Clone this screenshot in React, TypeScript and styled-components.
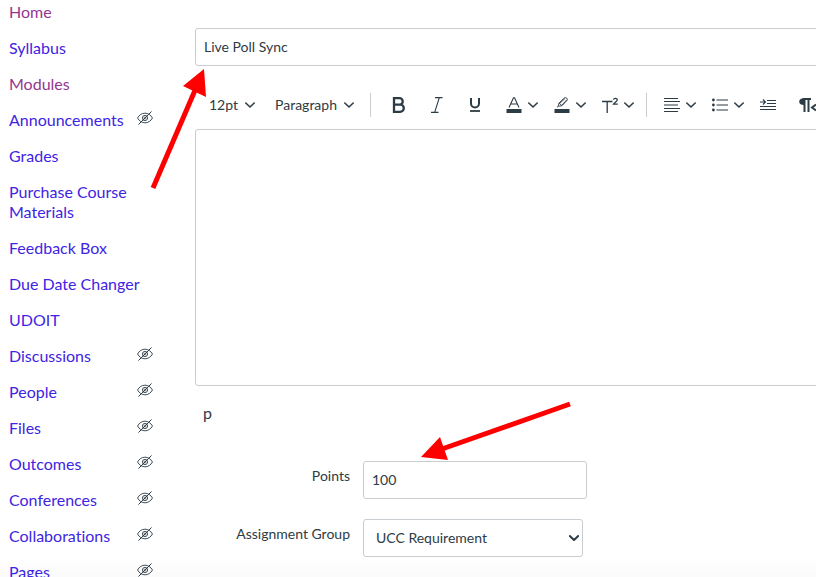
import React from "react";
import styled, { createGlobalStyle } from "styled-components";

const ink = "#2d3b45";
const line = "#c7cdd1";

const GlobalStyle = createGlobalStyle`
  * { box-sizing: border-box; }
  body { margin: 0; background: #fff; }
  body, button, input, select, textarea {
    font-family: Lato, "Liberation Sans", sans-serif;
    font-variant-ligatures: none;
    color: ${ink};
  }
`;

const Page = styled.div`
  display: flex;
  height: 100vh;
  overflow: hidden;
  background: linear-gradient(to top, #fafafa, #fff 20px);
`;

const CourseNav = styled.nav`
  flex: none;
  width: 195px;
  padding: 2px 42px 0 9px;
`;

const NavList = styled.ul`
  display: flex;
  flex-direction: column;
  gap: 16px;
  margin: 0;
  padding: 0;
  list-style: none;
`;

const NavItem = styled.li`
  display: flex;
  justify-content: space-between;
  font-size: 16px;
  line-height: 20px;
  svg { flex: none; }
`;

const NavLink = styled.a<{ $visited?: boolean }>`
  color: ${(p) => (p.$visited ? "#943690" : "#4024e2")};
  text-decoration: none;
`;

const Main = styled.main`
  flex: 1;
  min-width: 0;
  margin-right: -16px;
  padding-top: 28px;
`;

const Anchor = styled.div`
  position: relative;
`;

const Field = styled.input`
  display: block;
  width: 100%;
  height: 38px;
  padding: 0 8px 2px;
  border: 1px solid ${line};
  border-radius: 3px;
  background: #fff;
  font-size: 14px;
  line-height: 20px;
`;

const Toolbar = styled.div`
  display: flex;
  align-items: flex-start;
  height: 63px;
  padding: 15px 0 0 6px;
  overflow: hidden;
`;

const Group = styled.div`
  display: flex;
  flex: none;
  margin-right: 4px;
`;

const Tool = styled.button<{ $wide?: boolean }>`
  display: flex;
  flex: none;
  align-items: center;
  gap: 6px;
  height: 48px;
  padding: 0 ${(p) => (p.$wide ? 11 : 8)}px;
  border: 0;
  background: none;
`;

const TextTool = styled(Tool)`
  gap: 7px;
  padding-right: 12px;
  font-size: 14px;
  line-height: 20px;
`;

const Divider = styled.span`
  flex: none;
  width: 1px;
  height: 24px;
  margin: 12px 9px 0 0;
  background: ${line};
`;

const Editor = styled.textarea`
  display: block;
  width: 100%;
  height: 257px;
  padding: 12px;
  border: 1px solid ${line};
  border-radius: 3px;
  resize: none;
  background: #fff;
  font-size: 16px;
`;

const ElementPath = styled.div`
  padding: 17px 8px 0;
  font-size: 16px;
  line-height: 20px;
`;

const Form = styled.form`
  display: grid;
  grid-template-columns: 155px 224px;
  gap: 20px 13px;
  margin-top: 38px;
`;

const Label = styled.label`
  padding-top: 5px;
  font-size: 14px;
  line-height: 20px;
  text-align: right;
`;

const SelectWrap = styled.div`
  position: relative;
  width: 220px;
  svg {
    position: absolute;
    right: 4px;
    top: 14px;
    pointer-events: none;
  }
`;

const Select = styled.select`
  appearance: none;
  display: block;
  width: 100%;
  height: 38px;
  padding: 0 24px 2px 12px;
  border: 1px solid ${line};
  border-radius: 3px;
  background: #fff;
  font-size: 14px;
`;

const Pointer = styled.svg<{ $left: number; $top: number }>`
  position: absolute;
  left: ${(p) => p.$left}px;
  top: ${(p) => p.$top}px;
  pointer-events: none;
  z-index: 1;
`;

const Icon = ({ children, w = 16 }: { children: React.ReactNode; w?: number }) => (
  <svg width={w} height="16" viewBox={`0 0 ${w} 16`} fill="none" stroke={ink} aria-hidden="true">
    {children}
  </svg>
);

const Chevron = ({ weight = 1.6 }: { weight?: number }) => (
  <svg width="10" height="10" viewBox="0 0 10 10" fill="none" stroke={ink} strokeWidth={weight} strokeLinecap="round" strokeLinejoin="round" aria-hidden="true">
    <path d="M.8 3 5 7 9.2 3" />
  </svg>
);

const HiddenIcon = () => (
  <svg width="16" height="16" viewBox="0 0 16 16" fill="none" stroke={ink} role="img" aria-label="Hidden from students">
    <path d="M.5 8C2.4 4.8 5 3.2 8 3.2S13.6 4.8 15.5 8C13.6 11.2 11 12.8 8 12.8S2.4 11.2.5 8Z" strokeWidth=".9" />
    <circle cx="8" cy="8" r="2.6" strokeWidth=".9" />
    <circle cx="8" cy="8" r="1" strokeWidth=".6" />
    <path d="M1.500 14.500 14.500 1.500" strokeWidth="1" />
  </svg>
);

const BoldIcon = () => (
  <Icon><path d="M3 1.200h5.500a3.200 3.200 0 0 1 0 6.400H3h6.200a3.600 3.600 0 0 1 0 7.200H3Z" strokeWidth="2.300" /></Icon>
);
const ItalicIcon = () => (
  <Icon><path d="M6 .6h7.500M2 15.400h7.500M10.300.6 5.700 15.400" strokeWidth="1.100" /></Icon>
);
const UnderlineIcon = () => (
  <Icon><path d="M4 1v5.500a4 4 0 0 0 8 0V1" strokeWidth="2" /><path d="M3 14h10" strokeWidth="1.800" /></Icon>
);
const TextColorIcon = () => (
  <Icon>
    <path d="M3 10.500 7.500.8h1l4.500 9.700M4.500 7h7" strokeWidth="1.100" />
    <path d="M.5 14h15" strokeWidth="4" />
  </Icon>
);
const HighlightIcon = () => (
  <Icon>
    <path d="M5 6 10.500.8c1.800-.6 3.200.7 2.700 2.400L8 8.700ZM5 6l-.8 3.300L8 8.700M4.200 9.300 3 10.300M6 6l5-4.500M8 8 12.600 3" strokeWidth=".9" />
    <path d="M.5 14h15" strokeWidth="4" />
  </Icon>
);
const SuperscriptIcon = () => (
  <Icon>
    <path d="M0 4.500h10.500M5.200 4.500V16" strokeWidth="1.300" />
    <path d="M11.500 2.600c.3-1.900 3.900-1.700 3.700.4-.1 1.500-2.700 2.500-3.700 4.200h4.300" strokeWidth="1.300" />
  </Icon>
);
const AlignIcon = () => (
  <Icon><path d="M0 1.500h14M0 4.500h16M0 8h14M0 11.500h16M0 14.500h14" strokeWidth="1.100" /></Icon>
);
const ListIcon = () => (
  <Icon>
    <path d="M4.500 3H16M4.500 8H16M4.500 13H16" strokeWidth="1.100" />
    <g fill={ink} stroke="none"><circle cx="1.400" cy="3" r="1.400" /><circle cx="1.400" cy="8" r="1.400" /><circle cx="1.400" cy="13" r="1.400" /></g>
  </Icon>
);
const IndentIcon = () => (
  <Icon><path d="M7 3.500h9M7 6.500h9M0 9.500h16M0 12.500h16M0 5h5M3 2.500 5.500 5 3 7.500" strokeWidth="1.100" /></Icon>
);
const DirectionIcon = () => (
  <Icon w={18}>
    <path d="M6 1C2.200 1 .2 2.300.2 4.700S2.200 8 5 8h1Z" fill={ink} stroke="none" />
    <path d="M4 2h8M5.500 2v13M9.500 2v13" strokeWidth="2" />
    <path d="M17 7.500 13 10.500 17 13.500" strokeWidth="2" />
  </Icon>
);

const links: { name: string; visited?: boolean; hidden?: boolean }[] = [
  { name: "Home", visited: true },
  { name: "Syllabus" },
  { name: "Modules", visited: true },
  { name: "Announcements", hidden: true },
  { name: "Grades" },
  { name: "Purchase Course Materials" },
  { name: "Feedback Box" },
  { name: "Due Date Changer" },
  { name: "UDOIT" },
  { name: "Discussions", hidden: true },
  { name: "People", hidden: true },
  { name: "Files", hidden: true },
  { name: "Outcomes", hidden: true },
  { name: "Conferences", hidden: true },
  { name: "Collaborations", hidden: true },
  { name: "Pages", hidden: true },
];

export default function App() {
  return (
    <Page>
      <GlobalStyle />
      <CourseNav aria-label="Course">
        <NavList>
          {links.map((l) => (
            <NavItem key={l.name}>
              <NavLink href="#" $visited={l.visited}>{l.name}</NavLink>
              {l.hidden && <HiddenIcon />}
            </NavItem>
          ))}
        </NavList>
      </CourseNav>
      <Main>
        <Anchor>
          <Field aria-label="Assignment name" defaultValue="Live Poll Sync" />
          <Pointer $left={-45} $top={40} width="60" height="124" viewBox="0 0 60 124">
            <path d="M3 120 46 20" stroke="#f00" strokeWidth="5" />
            <path d="M54 1 56 29 33 18Z" fill="#f00" />
          </Pointer>
        </Anchor>
        <Toolbar role="toolbar" aria-label="Text formatting">
          <Group>
            <TextTool>12pt<Chevron /></TextTool>
            <TextTool>Paragraph<Chevron /></TextTool>
          </Group>
          <Divider />
          <Group>
            <Tool $wide aria-label="Bold"><BoldIcon /></Tool>
            <Tool $wide aria-label="Italic"><ItalicIcon /></Tool>
            <Tool $wide aria-label="Underline"><UnderlineIcon /></Tool>
          </Group>
          <Group>
            <Tool aria-label="Text color"><TextColorIcon /><Chevron /></Tool>
            <Tool aria-label="Highlight color"><HighlightIcon /><Chevron /></Tool>
            <Tool aria-label="Superscript"><SuperscriptIcon /><Chevron /></Tool>
          </Group>
          <Divider />
          <Group>
            <Tool aria-label="Align"><AlignIcon /><Chevron /></Tool>
            <Tool aria-label="List"><ListIcon /><Chevron /></Tool>
            <Tool aria-label="Increase indent"><IndentIcon /></Tool>
          </Group>
          <Group>
            <Tool $wide aria-label="Right to left"><DirectionIcon /></Tool>
          </Group>
        </Toolbar>
        <Editor aria-label="Description" />
        <ElementPath>p</ElementPath>
        <Form>
          <Label htmlFor="points">Points</Label>
          <Anchor>
            <Field id="points" defaultValue="100" />
            <Pointer $left={57} $top={-61} width="152" height="62" viewBox="0 0 152 62">
              <path d="M150 4 22 49" stroke="#f00" strokeWidth="5" />
              <path d="M1 57 20 37 28 60Z" fill="#f00" />
            </Pointer>
          </Anchor>
          <Label htmlFor="group">Assignment Group</Label>
          <SelectWrap>
            <Select id="group" defaultValue="UCC Requirement">
              <option>UCC Requirement</option>
            </Select>
            <Chevron weight={2} />
          </SelectWrap>
        </Form>
      </Main>
    </Page>
  );
}
